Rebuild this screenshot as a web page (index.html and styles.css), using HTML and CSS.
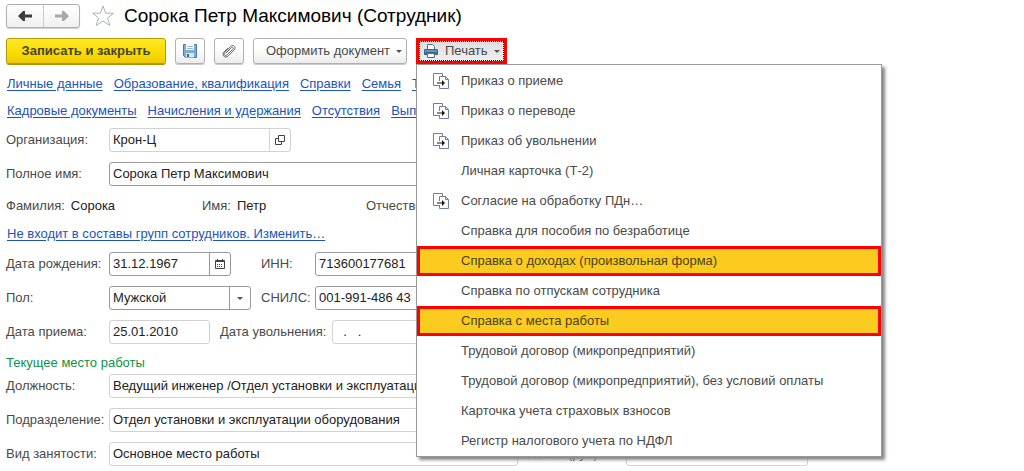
FILE: index.html
```html
<!DOCTYPE html>
<html lang="ru">
<head>
<meta charset="utf-8">
<title>Сорока Петр Максимович (Сотрудник)</title>
<link rel="stylesheet" href="styles.css">
</head>
<body>
<svg class="defs" aria-hidden="true">
  <symbol id="sheets" viewBox="0 0 16 16">
    <path d="M6 12.500H.5V.5h9V3" fill="none" stroke="#6b7fa8"/>
    <path d="M6.500 8V3.500h6l3 3v9h-9V12" fill="none" stroke="#6b7fa8"/>
    <path d="M12.500 3.500v3h3" fill="none" stroke="#6b7fa8"/>
    <path d="M4 9.500h5V7l3 3-3 3v-2.500H4z" fill="#161616"/>
  </symbol>
</svg>
<header class="header">
  <div class="history">
    <button type="button" aria-label="Назад"><svg width="16" height="12" viewBox="0 0 16 12"><path d="M1 6l5-5h2v3.500h7v3H8V11H6z" fill="#3d3d3d"/></svg></button>
    <button type="button" aria-label="Вперед"><svg width="16" height="12" viewBox="0 0 16 12"><path d="M15 6l-5-5H8v3.500H1v3h7V11h2z" fill="#a9a9a9"/></svg></button>
  </div>
  <button type="button" class="star" aria-label="В избранное"><svg width="24" height="24" viewBox="0 0 24 24"><path d="M12 2l2.700 7.200h7.800l-6 4.800 2.300 7.500L12 17l-6.800 4.500L7.500 14l-6-4.800h7.800z" fill="#fff" stroke="#a9b1bb"/></svg></button>
  <h1 class="title">Сорока Петр Максимович (Сотрудник)</h1>
</header>
<div class="toolbar">
  <button type="button" class="btn primary">Записать и закрыть</button>
  <button type="button" class="btn icon" aria-label="Записать"><svg width="16" height="16" viewBox="0 0 16 16"><path d="M1.500 1.500h13v13h-11l-2-2z" fill="#7badd9" stroke="#4a78a8"/><path d="M4 1h8v6H4z" fill="#fff"/><path d="M5 3.500h6M5 5.500h6" stroke="#9db6cf"/><path d="M4 10h8v4.500H4z" fill="#dce6ee"/><path d="M5 11h2v3H5z" fill="#41678f"/></svg></button>
  <button type="button" class="btn icon" aria-label="Файлы"><svg width="16" height="16" viewBox="0 0 16 16"><path d="M5 10l5.200-5.200c1.300-1.300 2.800.2 1.500 1.500L6.200 11.800c-2 2-4.300-.3-2.400-2.300L9.500 3.600c2.800-2.800 6.300.5 3.600 3.300L7.500 12.700c-3.400 3.400-7.500-.5-4.300-3.900L6.500 5.500" fill="none" stroke="#686868" stroke-linecap="round"/></svg></button>
  <button type="button" class="btn document">Оформить документ<span class="caret"></span></button>
  <div class="print">
    <button type="button" class="print-button" aria-expanded="true" aria-haspopup="menu"><svg width="16" height="16" viewBox="0 0 16 16"><path d="M4.500 6V1.500h5l2 2V6" fill="#fff" stroke="#4b7090"/><path d="M1 7q0-1 1-1h12q1 0 1 1v5H1z" fill="#376b95"/><path d="M2 8h12" stroke="#9dbbd2"/><path d="M4.500 10.500h7v4h-7z" fill="#fff" stroke="#4b7090"/></svg>Печать<span class="caret"></span></button>
    <div class="menu" role="menu">
      <button type="button" role="menuitem"><svg><use href="#sheets"/></svg><span>Приказ о приеме</span></button>
      <button type="button" role="menuitem"><svg><use href="#sheets"/></svg><span>Приказ о переводе</span></button>
      <button type="button" role="menuitem"><svg><use href="#sheets"/></svg><span>Приказ об увольнении</span></button>
      <button type="button" role="menuitem"><span>Личная карточка (Т-2)</span></button>
      <button type="button" role="menuitem"><svg><use href="#sheets"/></svg><span>Согласие на обработку ПДн…</span></button>
      <button type="button" role="menuitem"><span>Справка для пособия по безработице</span></button>
      <button type="button" role="menuitem" class="marked"><span>Справка о доходах (произвольная форма)</span></button>
      <button type="button" role="menuitem"><span>Справка по отпускам сотрудника</span></button>
      <button type="button" role="menuitem" class="marked"><span>Справка с места работы</span></button>
      <button type="button" role="menuitem"><span>Трудовой договор (микропредприятий)</span></button>
      <button type="button" role="menuitem"><span>Трудовой договор (микропредприятий), без условий оплаты</span></button>
      <button type="button" role="menuitem"><span>Карточка учета страховых взносов</span></button>
      <button type="button" role="menuitem"><span>Регистр налогового учета по НДФЛ</span></button>
    </div>
  </div>
</div>
<nav class="links">
  <div><a href="#">Личные данные</a><a href="#">Образование, квалификация</a><a href="#">Справки</a><a href="#">Семья</a><a href="#">Т</a></div>
  <div><a href="#">Кадровые документы</a><a href="#">Начисления и удержания</a><a href="#">Отсутствия</a><a href="#">Вып</a></div>
</nav>
<form class="form">
  <div class="row"><label for="org">Организация:</label><div class="field soft medium"><input id="org" value="Крон-Ц"><button type="button" aria-label="Открыть"><svg width="10" height="10" viewBox="0 0 10 10"><path d="M3.500.5h6v6h-6zM3 3.500H.5v6h6V7" fill="none" stroke="#444"/></svg></button></div></div>
  <div class="row"><label for="full">Полное имя:</label><div class="field wide"><input id="full" value="Сорока Петр Максимович"></div></div>
  <div class="row names"><div><span>Фамилия:</span><output>Сорока</output></div><div><span>Имя:</span><output>Петр</output></div><div><span>Отчество:</span></div></div>
  <div class="row group"><a href="#">Не входит в составы групп сотрудников. Изменить…</a></div>
  <div class="row"><label for="birth">Дата рождения:</label><div class="pair"><div class="field date"><input id="birth" value="31.12.1967"><button type="button" aria-label="Календарь"><svg width="10" height="10" viewBox="0 0 10 10"><path d="M.5 1.500h9v8h-9z" fill="none" stroke="#444"/><path d="M0 2.500h10M2.500 0v2M7.500 0v2" stroke="#444"/><path d="M2 5.500h6M2 7.500h6" stroke="#444" stroke-dasharray="1 1"/></svg></button></div></div><label class="second" for="inn">ИНН:</label><div class="field number"><input id="inn" value="713600177681"></div></div>
  <div class="row"><label for="sex">Пол:</label><div class="pair"><div class="field choice"><select id="sex"><option>Мужской</option></select><span class="arrow"><span class="caret"></span></span></div></div><label class="second" for="snils">СНИЛС:</label><div class="field number"><input id="snils" value="001-991-486 43"></div></div>
  <div class="row"><label for="hired">Дата приема:</label><div class="field soft day"><input id="hired" value="25.01.2010"></div><label class="fired" for="fired">Дата увольнения:</label><div class="field soft day"><input id="fired" value="  .   ."></div></div>
  <h2 class="section">Текущее место работы</h2>
  <div class="row"><label for="post">Должность:</label><div class="field soft wide"><input id="post" value="Ведущий инженер /Отдел установки и эксплуатации оборудования/"></div></div>
  <div class="row"><label for="unit">Подразделение:</label><div class="field soft wide"><input id="unit" value="Отдел установки и эксплуатации оборудования"></div></div>
  <div class="row"><label for="kind">Вид занятости:</label><div class="field soft wide"><input id="kind" value="Основное место работы"></div><label class="advance" for="advance">Аванс (руб):</label><div class="field soft medium"><input id="advance"></div></div>
</form>
</body>
</html>
```
FILE: styles.css
```css
* { box-sizing: border-box; }
body {
  margin: 0;
  padding: 4px 6px;
  background: #fff;
  color: #4a4a4a;
  font: 13px/20px "Liberation Sans", Arial, sans-serif;
}
button, input, select { font: inherit; color: inherit; margin: 0; padding: 0; border: 0; background: none; }
a { color: #1b53bd; text-decoration: underline; text-underline-offset: 2px; }
svg { flex: none; display: block; }
.defs { position: absolute; width: 0; height: 0; }

.header { display: flex; align-items: center; height: 24px; }
.history { display: flex; border: 1px solid #b0b0b0; border-radius: 3px; background: linear-gradient(#fff, #f0f0f0); box-shadow: 0 1px 1px #ccc; }
.history button { display: grid; place-items: center; width: 36px; height: 22px; }
.history button + button { border-left: 1px solid #ccc; }
.star { margin: 0 9px 0 11px; }
.title { margin: 0; font-size: 19px; font-weight: 400; line-height: 24px; color: #000; }

.toolbar { display: flex; align-items: center; gap: 9px; margin-top: 10px; height: 26px; }
.btn { display: flex; align-items: center; justify-content: center; height: 26px; border: 1px solid #b0b0b0; border-radius: 3px; background: linear-gradient(#fff 40%, #ececec); box-shadow: 0 1px 0 #ccc; }
.primary { width: 160px; border-color: #b39b00; background: linear-gradient(#ffe924, #fadb00 60%, #eecb00); box-shadow: 0 1px 0 #a89200; font-weight: 700; color: #474532; }
.icon { width: 30px; }
.document { width: 154px; padding-left: 8px; gap: 6px; }
.caret { flex: none; width: 0; border: 3px solid transparent; border-top-color: #555; border-bottom: 0; }

.print { position: relative; }
.print-button { display: flex; align-items: center; gap: 6px; width: 91px; height: 26px; padding-left: 4px; border: 3px solid #f00; background: linear-gradient(#ddd, #f0f0f0); outline: 1px dotted #111; outline-offset: -4px; }
.menu { position: absolute; top: 100%; left: 0; z-index: 2; width: 466px; padding-top: 1px; border: 1px solid #999; background: #fff; box-shadow: 3px 3px 3px #888; }
.menu button { display: flex; align-items: center; width: 100%; height: 30px; padding-left: 16px; text-align: left; }
.menu svg { width: 16px; height: 16px; }
.menu span { padding-left: 28px; }
.menu svg + span { padding-left: 12px; }
.menu .marked { padding-left: 13px; border: 3px solid #f00; background: #fbcb20; color: #4a431f; }

.links { display: grid; gap: 7px; margin: 10px 0 7px 1px; }
.links div { display: flex; gap: 11px; }

.form { display: grid; gap: 10px; }
.row { display: flex; align-items: center; height: 24px; }
.row > label:first-child { flex: 0 0 103px; }
.field { display: flex; height: 24px; border: 1px solid #999; border-radius: 3px; background: #fff; color: #222; }
.field input, .field select { flex: 1; min-width: 0; width: 0; padding: 0 3px; outline: 0; appearance: none; }
.field input { white-space: pre; }
.field button, .arrow { display: grid; place-items: center; flex: 0 0 21px; border-left: 1px solid #999; }
.soft, .soft button { border-color: #d2d2d2; }
.medium { width: 182px; }
.wide { width: 409px; }
.date { width: 122px; }
.choice { width: 142px; }
.number { width: 130px; }
.day { width: 101px; }
.pair { width: 152px; }
.second { width: 54px; }
.fired { width: 122px; padding-left: 10px; white-space: nowrap; }
.advance { width: 108px; padding-left: 10px; }
.names { height: 20px; }
.names div { display: flex; gap: 6px; width: 196px; }
.names div + div { width: 164px; }
.names output { color: #222; }
.group { height: 16px; padding-left: 1px; }
.section { margin: 0 0 -8px; font-size: 13px; font-weight: 400; line-height: 18px; color: #0a9448; }
```
